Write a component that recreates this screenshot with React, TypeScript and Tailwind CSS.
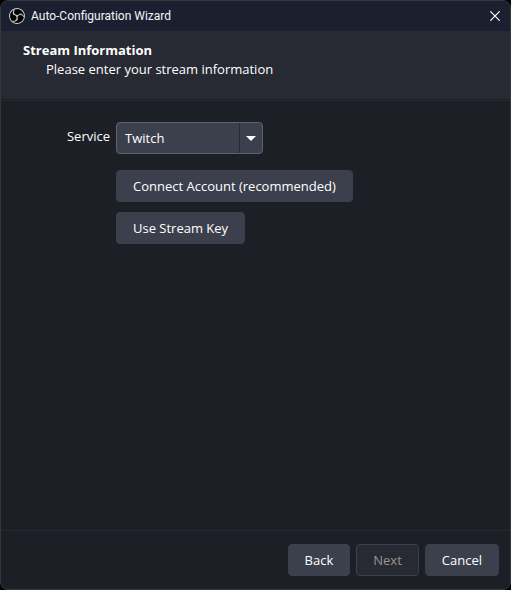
import { useState } from "react";
import type { ReactNode } from "react";
import { SiObsstudio } from "react-icons/si";

type ButtonProps = { children: ReactNode; disabled?: boolean };

function WizardButton({ children, disabled = false }: ButtonProps) {
  return (
    <button
      type="button"
      disabled={disabled}
      className="h-8 rounded border border-[#3c404d] bg-[#3c404d] px-4 text-white hover:bg-[#4a4f5e] disabled:bg-[#272a33] disabled:text-[#9d928c]"
    >
      {children}
    </button>
  );
}

function TitleBar() {
  return (
    <div className="flex h-[30px] items-center bg-[#1b2030] pr-[7px] pl-2">
      <SiObsstudio className="size-4 rounded-full bg-black stroke-[#e2e2e2] stroke-[0.7px] text-[#e2e2e2]" aria-hidden="true" />
      <h1 className="ml-1.5 flex-1 font-['Roboto','Open_Sans',sans-serif] text-xs text-[#f4f4f6]">
        Auto-Configuration Wizard
      </h1>
      <button type="button" aria-label="Close" className="flex size-4 items-center justify-center text-white">
        <svg viewBox="0 0 10 10" className="size-[10px]" fill="none" stroke="currentColor" strokeWidth="1.2" aria-hidden="true">
          <path d="M0.3 0.3 9.7 9.7M9.7 0.3 0.3 9.7" />
        </svg>
      </button>
    </div>
  );
}

export default function App() {
  const [service, setService] = useState("Twitch");

  return (
    <div className="min-h-screen bg-black font-['Open_Sans','Noto_Sans',sans-serif] text-[13px] leading-[19px] text-white">
      <main className="flex min-h-screen flex-col overflow-hidden rounded-lg border border-[#36373a] bg-[#1d1f26]">
        <TitleBar />

        <header className="h-[70px] border-b border-[#272a33] bg-[#272a33] px-[22px] pt-[10px] shadow-[inset_0_-1px_0_#1b1d23]">
          <h2 className="font-bold">Stream Information</h2>
          <p className="pl-[23px]">Please enter your stream information</p>
        </header>

        <section className="grid flex-1 grid-cols-[109px_1fr] content-start justify-items-start gap-x-1.5 px-0 pt-[21px]">
          <label htmlFor="service" className="justify-self-end pt-[5px]">
            Service
          </label>
          <div className="relative">
            <select
              id="service"
              value={service}
              onChange={(event) => setService(event.target.value)}
              className="block h-8 w-[147px] appearance-none rounded border border-[#5b6273] bg-[#3c404d] px-2 text-white"
            >
              <option>Twitch</option>
              <option>YouTube</option>
            </select>
            <span className="pointer-events-none absolute inset-y-px right-px flex w-[23px] items-center justify-center border-l border-[#272a33]">
              <svg viewBox="0 0 10 5" className="h-[5px] w-[10px] fill-white" aria-hidden="true">
                <path d="M0 0H10L5 5Z" />
              </svg>
            </span>
          </div>
          <div className="col-start-2 flex flex-col items-start gap-[10px] pt-4">
            <WizardButton>Connect Account (recommended)</WizardButton>
            <WizardButton>Use Stream Key</WizardButton>
          </div>
        </section>

        <footer className="flex justify-end gap-1.5 border-t border-[#272a33] px-[11px] py-[13px]">
          <WizardButton>Back</WizardButton>
          <WizardButton disabled>Next</WizardButton>
          <WizardButton>Cancel</WizardButton>
        </footer>
      </main>
    </div>
  );
}
